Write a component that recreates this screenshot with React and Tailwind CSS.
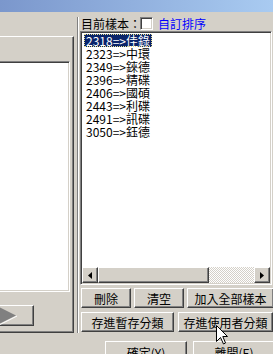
import React from "react";

const FONT = { fontFamily: '"Noto Sans CJK TC", "Noto Sans", sans-serif' };

const ITEMS = [
  "2318=>佳錄",
  "2323=>中環",
  "2349=>錸德",
  "2396=>精碟",
  "2406=>國碩",
  "2443=>利碟",
  "2491=>訊碟",
  "3050=>鈺德",
];

// classic raised button bevel
const raised =
  "border border-t-white border-l-white border-r-[#404040] border-b-[#404040] shadow-[inset_-1px_-1px_0_#808080] bg-[#d4d0c8]";

function Btn({ className, children }) {
  return (
    <div className={`${raised} ${className} shrink-0 flex items-center justify-center text-[12px] leading-[13px] text-black`}>
      {children}
    </div>
  );
}

function ScrollArrow({ dir }) {
  return (
    <div className={`${raised} w-[16px] h-[16px] shrink-0 flex items-center justify-center`}>
      <svg width="4" height="7" viewBox="0 0 4 7">
        {dir === "left" ? <polygon points="4,0 0,3.5 4,7" fill="#000" /> : <polygon points="0,0 4,3.5 0,7" fill="#000" />}
      </svg>
    </div>
  );
}

export default function App() {
  return (
    <div className="w-[273px] h-[354px] bg-[#d4d0c8] overflow-hidden relative text-[12px] leading-[13px] text-black" style={FONT}>
      {/* title bar */}
      <div className="h-[12px] bg-gradient-to-r from-[#7b97cc] to-[#a9cbf1]" />

      <div className="flex mt-[5px]">
        {/* left panel */}
        <div className="w-[74px] shrink-0 pt-[19px]">
          <div className="h-[297px] border-t border-t-white border-r border-r-[#404040] border-b border-b-[#404040] shadow-[inset_-1px_-1px_0_#808080] flex flex-col">
            <div className="mt-[24px] -ml-[4px] mr-[3px] h-[231px] bg-white border border-t-[#808080] border-l-[#808080] border-r-white border-b-white shadow-[inset_1px_1px_0_#404040,inset_-1px_-1px_0_#d4d0c8]" />
            <div className={`${raised} mt-[13px] -ml-[2px] w-[36px] h-[21px] relative overflow-hidden`}>
              <svg className="absolute left-0 top-0" width="20" height="19" viewBox="0 0 20 19">
                <polygon points="0,1 17,9.5 0,18" fill="#808080" />
                <polyline points="0,19 18,10" stroke="#fff" strokeWidth="1" fill="none" />
              </svg>
            </div>
          </div>
        </div>

        {/* splitter */}
        <div className="ml-[3px] w-[2px] h-[316px] shrink-0 border-l border-l-[#808080] border-r border-r-white" />

        {/* right panel */}
        <div className="ml-px w-[193px] shrink-0 flex flex-col">
          <div className="h-[13px] flex items-center">
            <span className="w-[60px] pl-px whitespace-nowrap">目前樣本：</span>
            <div className="w-[13px] h-[13px] bg-white border border-t-[#808080] border-l-[#808080] border-r-white border-b-white shadow-[inset_1px_1px_0_#404040,inset_-1px_-1px_0_#d4d0c8]" />
            <span className="ml-[5px] text-[#0000ff] whitespace-nowrap">自訂排序</span>
          </div>

          {/* listbox */}
          <div className="mt-[1px] w-[192px] h-[254px] bg-white border border-t-[#808080] border-l-[#808080] border-r-white border-b-white shadow-[inset_1px_1px_0_#404040,inset_-1px_-1px_0_#d4d0c8] p-[1px] flex flex-col">
            <div className="flex-1 pt-[1px] pl-[2px]">
              {ITEMS.map((it, i) => (
                <div key={it} className="h-[13px] flex items-center">
                  <span
                    className={
                      i === 0
                        ? "px-[2px] h-[13px] flex items-center whitespace-nowrap bg-[#0a246a] text-white outline-1 outline-dotted outline-[#e8e090] -outline-offset-1"
                        : "px-[2px] h-[13px] flex items-center whitespace-nowrap"
                    }
                  >
                    {it}
                  </span>
                </div>
              ))}
            </div>
            <div className="h-[16px] flex">
              <ScrollArrow dir="left" />
              <div className={`${raised} w-[111px] h-[16px] shrink-0`} />
              <div className="flex-1 h-[16px] bg-[repeating-conic-gradient(#ffffff_0_25%,#d4d0c8_0_50%)] bg-[length:2px_2px]" />
              <ScrollArrow dir="right" />
            </div>
          </div>

          <div className="mt-[3px] ml-px flex gap-[3px]">
            <Btn className="w-[50px] h-[20px]">刪除</Btn>
            <Btn className="w-[50px] h-[20px]">清空</Btn>
            <Btn className="w-[87px] h-[20px]">加入全部樣本</Btn>
          </div>
          <div className="mt-[4px] ml-px flex gap-[4px]">
            <Btn className="w-[93px] h-[20px]">存進暫存分類</Btn>
            <Btn className="w-[95px] h-[20px]">存進使用者分類</Btn>
          </div>
          <div className="mt-[9px] ml-[25px] flex gap-[6px]">
            <Btn className="w-[82px] h-[22px] items-start pt-[4px]">確定(Y)</Btn>
            <Btn className="w-[82px] h-[22px] items-start pt-[4px]">離開(E)</Btn>
          </div>
        </div>
      </div>

      {/* mouse pointer */}
      <svg className="absolute left-[216px] top-[325px]" width="13" height="20" viewBox="0 0 13 20">
        <polygon points="0.5,0.5 0.5,16.5 4.5,12.5 7.5,19 9.5,18 6.8,11.5 11.5,11.5" fill="#fff" stroke="#000" strokeWidth="1" strokeLinejoin="miter" />
      </svg>
    </div>
  );
}
